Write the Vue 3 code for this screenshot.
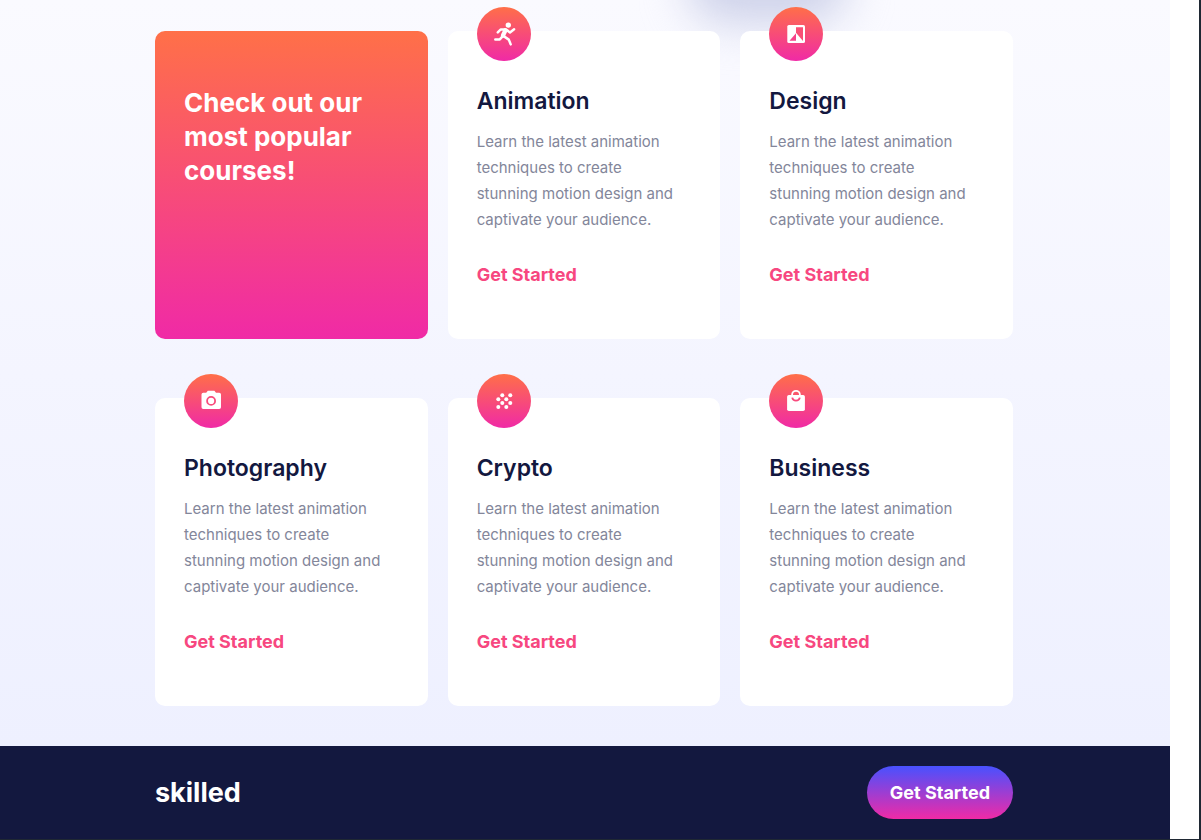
<script setup>
const blurb =
  'Learn the latest animation techniques to create stunning motion design and captivate your audience.'

const courses = [
  { id: 'animation', title: 'Animation' },
  { id: 'design', title: 'Design' },
  { id: 'photography', title: 'Photography' },
  { id: 'crypto', title: 'Crypto' },
  { id: 'business', title: 'Business' },
]

const dots = [
  [25.3, 21.3], [33.3, 21.3],
  [21.3, 25.2], [29.3, 25.2],
  [25.3, 29.1], [33.3, 29.1],
  [21.3, 33], [29.3, 33],
]
</script>

<template>
  <div class="frame">
    <div class="page">
      <main class="courses">
        <div class="glow" aria-hidden="true"></div>
        <div class="grid">
          <section class="intro">
            <h2>Check out our most popular courses!</h2>
          </section>

          <article v-for="course in courses" :key="course.id" class="card">
            <svg class="icon" viewBox="0 0 54 54" aria-hidden="true">
              <defs>
                <linearGradient :id="'badge-' + course.id" x1="0" y1="0" x2="0" y2="1">
                  <stop offset="0" stop-color="#ff6f48" />
                  <stop offset="1" stop-color="#f02aa6" />
                </linearGradient>
              </defs>
              <circle cx="27" cy="27" r="27" :fill="`url(#badge-${course.id})`" />

              <g v-if="course.id === 'animation'" fill="none" stroke="#fff" stroke-width="2.5" stroke-linecap="round" stroke-linejoin="round">
                <circle cx="31.3" cy="18.1" r="2.7" fill="#fff" stroke="none" />
                <path d="M20.8 25.4 23.6 22.5H29l4 2.9 4.1-3.1" />
                <path d="M28.4 23.4 26 28.4" stroke-width="4.4" />
                <path d="M25.6 29.4 22.8 32.4H18.3" />
                <path d="M27 29.4 31.8 32.6 33.7 37.4" />
              </g>

              <g v-else-if="course.id === 'design'">
                <rect x="18.3" y="18" width="17.7" height="18" rx="1.6" fill="#fff" />
                <path d="M27 20.2h7V34l-7-8.2z" fill="#f94f76" />
                <path d="M27 26.2V33.8h-6.5z" fill="#f6438a" />
              </g>

              <g v-else-if="course.id === 'photography'">
                <path d="M22.2 18.7 23.8 16.8H30.4L32 18.7H35.2q1.8 0 1.8 1.8V33.2q0 1.8-1.8 1.8H19.3q-1.8 0-1.8-1.8V20.5q0-1.8 1.8-1.8z" fill="#fff" />
                <circle cx="27.1" cy="26.9" r="4" fill="none" stroke="#f84c7c" stroke-width="1.8" />
              </g>

              <g v-else-if="course.id === 'crypto'" fill="#fff">
                <circle v-for="(dot, i) in dots" :key="i" :cx="dot[0]" :cy="dot[1]" r="2" />
              </g>

              <g v-else>
                <rect x="18.1" y="21" width="17.8" height="16" rx="1.8" fill="#fff" />
                <path d="M23.1 22V20.7a3.9 3.9 0 0 1 7.8 0V22" fill="none" stroke="#fff" stroke-width="1.8" />
                <path d="M23.2 23.6a3.9 3.9 0 0 0 7.6 0" fill="none" stroke="#f84a7d" stroke-width="1.8" />
              </g>
            </svg>
            <h3>{{ course.title }}</h3>
            <p>{{ blurb }}</p>
            <a href="#" class="link">Get Started</a>
          </article>
        </div>
      </main>

      <footer class="footer">
        <a href="#" class="logo">skilled</a>
        <button type="button" class="cta">Get Started</button>
      </footer>
    </div>
  </div>
</template>

<style>
body {
  background: #fff;
}
</style>

<style scoped>
.frame {
  box-sizing: border-box;
  min-height: 100vh;
  display: flex;
  padding-right: 29px;
  border-right: 2px solid #1f2833;
  border-bottom: 1px solid #1f2833;
  font-family: Inter, "Liberation Sans", sans-serif;
}

.page {
  flex: 1;
  display: flex;
  flex-direction: column;
}

.courses {
  position: relative;
  flex: 1;
  overflow: hidden;
  padding: 31px 157px 40px 155px;
  background: linear-gradient(#fafaff, #eef0ff);
}

.glow {
  position: absolute;
  top: -80px;
  left: 65%;
  width: 160px;
  height: 104px;
  margin-left: -74px;
  border-radius: 40px;
  background: #ced2ea;
  filter: blur(22px);
}

.grid {
  position: relative;
  display: grid;
  grid-template-columns: repeat(3, 1fr);
  gap: 59px 20px;
}

.intro,
.card {
  box-sizing: border-box;
  min-height: 308px;
  border-radius: 10px;
}

.intro {
  padding: 55px 29px;
  background: linear-gradient(#ff7048, #f02aa6);
}

h2,
h3,
p {
  margin: 0;
}

h2 {
  color: #fff;
  font-size: 26px;
  font-weight: 700;
  line-height: 34px;
}

.card {
  position: relative;
  padding: 55px 36px 40px 29px;
  background: #fff;
}

.icon {
  position: absolute;
  top: -24px;
  left: 29px;
  width: 54px;
  height: 54px;
}

h3 {
  margin-bottom: 13px;
  color: #13183f;
  font-size: 23px;
  font-weight: 600;
  line-height: 30px;
}

p {
  margin-bottom: 30px;
  color: #83869a;
  font-size: 15px;
  line-height: 26px;
}

.link {
  color: #f74780;
  font-size: 18px;
  font-weight: 700;
  line-height: 24px;
  text-decoration: none;
}

.footer {
  display: flex;
  align-items: center;
  justify-content: space-between;
  padding: 20px 157px 20px 155px;
  background: #13183f;
}

.logo {
  color: #fff;
  font-size: 27px;
  font-weight: 700;
  line-height: 34px;
  text-decoration: none;
}

.cta {
  padding: 0 23px;
  height: 53px;
  border: 0;
  border-radius: 27px;
  background: linear-gradient(#4851ff, #f02aa6);
  color: #fff;
  font-family: inherit;
  font-size: 18px;
  font-weight: 700;
}
</style>
